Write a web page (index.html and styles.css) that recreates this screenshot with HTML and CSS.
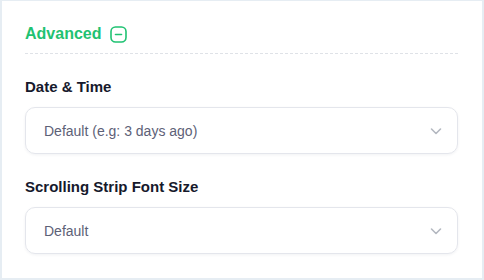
FILE: index.html
```html
<!DOCTYPE html>
<html>
<head>
<meta charset="utf-8">
<link rel="stylesheet" href="styles.css">
</head>
<body>
<div class="panel">
  <div class="header">
    <span class="title">Advanced</span>
    <span class="toggle">
      <svg width="17" height="17" viewBox="0 0 17 17"><rect x="1" y="1" width="15" height="15" rx="4.5" fill="none" stroke="#1fc272" stroke-width="1.6"/><line x1="5.5" y1="8.5" x2="11.5" y2="8.5" stroke="#1fc272" stroke-width="1.6" stroke-linecap="round"/></svg>
    </span>
  </div>
  <div class="field">
    <div class="label">Date &amp; Time</div>
    <div class="select">
      <span class="value">Default (e.g: 3 days ago)</span>
      <svg class="chev" width="14" height="14" viewBox="0 0 14 14"><path d="M2.5 5 L7 9.5 L11.5 5" fill="none" stroke="#b4b8c0" stroke-width="1.6" stroke-linecap="round" stroke-linejoin="round"/></svg>
    </div>
  </div>
  <div class="field">
    <div class="label">Scrolling Strip Font Size</div>
    <div class="select">
      <span class="value">Default</span>
      <svg class="chev" width="14" height="14" viewBox="0 0 14 14"><path d="M2.5 5 L7 9.5 L11.5 5" fill="none" stroke="#b4b8c0" stroke-width="1.6" stroke-linecap="round" stroke-linejoin="round"/></svg>
    </div>
  </div>
</div>
</body>
</html>
```

FILE: styles.css
```css
* { box-sizing: border-box; }
html, body { margin: 0; padding: 0; background: #fff; }
body { font-family: "Liberation Sans", Arial, sans-serif; }
.panel {
  width: 484px;
  height: 280px;
  border: 2px solid #e6edf3;
  border-top-width: 1px;
  padding: 21px 24px 0 23px;
}
.header {
  display: flex;
  align-items: center;
  gap: 9px;
  height: 24px;
  box-sizing: content-box;
  padding-bottom: 7px;
  border-bottom: 1px dashed #dfe2e7;
}
.title {
  color: #1fc272;
  font-weight: 700;
  font-size: 16px;
  line-height: 24px;
}
.toggle { display: flex; }
.field { margin-top: 23px; }
.label {
  font-size: 15px;
  font-weight: 700;
  line-height: 20px;
  color: #16192c;
}
.select {
  margin-top: 10px;
  height: 47px;
  border: 1px solid #e4e6ec;
  border-radius: 10px;
  box-shadow: 0 1px 3px rgba(20, 30, 60, 0.06);
  display: flex;
  align-items: center;
  justify-content: space-between;
  padding: 0 14px 0 18px;
}
.value {
  font-size: 14px;
  color: #5d6177;
}
.chev { display: block; }
```
